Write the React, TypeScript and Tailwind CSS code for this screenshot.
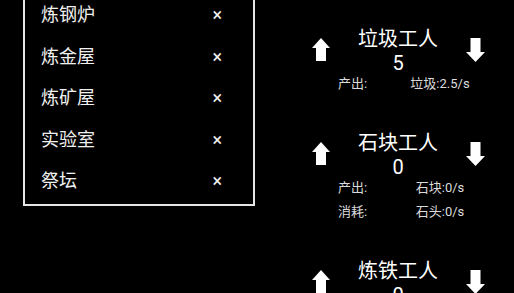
import React from "react";

const FONT = { fontFamily: '"Roboto", "Noto Sans CJK SC", sans-serif' };

function UpArrow() {
  return (
    <svg width="18" height="23" viewBox="0 0 18 23" className="block">
      <polygon points="9,0 18,10 14,10 14,23 4,23 4,10 0,10" fill="#fff" />
    </svg>
  );
}

function DownArrow() {
  return (
    <svg width="19" height="24" viewBox="0 0 19 24" className="block">
      <polygon points="4.5,0 14.5,0 14.5,14 19,14 9.5,24 0,14 4.5,14" fill="#fff" />
    </svg>
  );
}

const items = ["炼钢炉", "炼金屋", "炼矿屋", "实验室", "祭坛"];

type Worker = { name: string; count: string; stats: [string, string][] };

const workers: Worker[] = [
  { name: "垃圾工人", count: "5", stats: [["产出:", "垃圾:2.5/s"]] },
  {
    name: "石块工人",
    count: "0",
    stats: [
      ["产出:", "石块:0/s"],
      ["消耗:", "石头:0/s"],
    ],
  },
  { name: "炼铁工人", count: "0", stats: [["产出:", "铁:0/s"]] },
];

export default function App() {
  return (
    <div
      className="w-[514px] h-[293px] bg-black overflow-hidden flex text-white"
      style={FONT}
    >
      <div className="ml-[23px] mt-[-10px] w-[232px] h-[216px] shrink-0 border-2 border-[#e6e6e6] pt-[2px]">
        {items.map((t) => (
          <div
            key={t}
            className="h-[41.5px] flex items-center justify-between pl-[16px] pr-[31px]"
          >
            <span className="text-[18px] text-[#f0f0f0]">{t}</span>
            <span className="text-[18px] text-[#f0f0f0]">×</span>
          </div>
        ))}
      </div>
      <div className="ml-[57px] w-[173px] shrink-0 pt-[27px] flex flex-col">
        {workers.map((w) => (
          <div key={w.name} className="pb-[35px]">
            <div className="flex items-center justify-between">
              <UpArrow />
              <div className="flex flex-col items-center">
                <div className="h-[24px] leading-[24px] text-[20px]">{w.name}</div>
                <div className="h-[21px] leading-[24px] text-[20px]">{w.count}</div>
              </div>
              <DownArrow />
            </div>
            {w.stats.map(([a, b]) => (
              <div
                key={a}
                className="h-[24px] flex items-center text-[13px] text-[#dcdcdc]"
              >
                <span className="ml-[26px] w-[62px]">{a}</span>
                <span className="w-[80px] text-center">{b}</span>
              </div>
            ))}
          </div>
        ))}
      </div>
    </div>
  );
}
